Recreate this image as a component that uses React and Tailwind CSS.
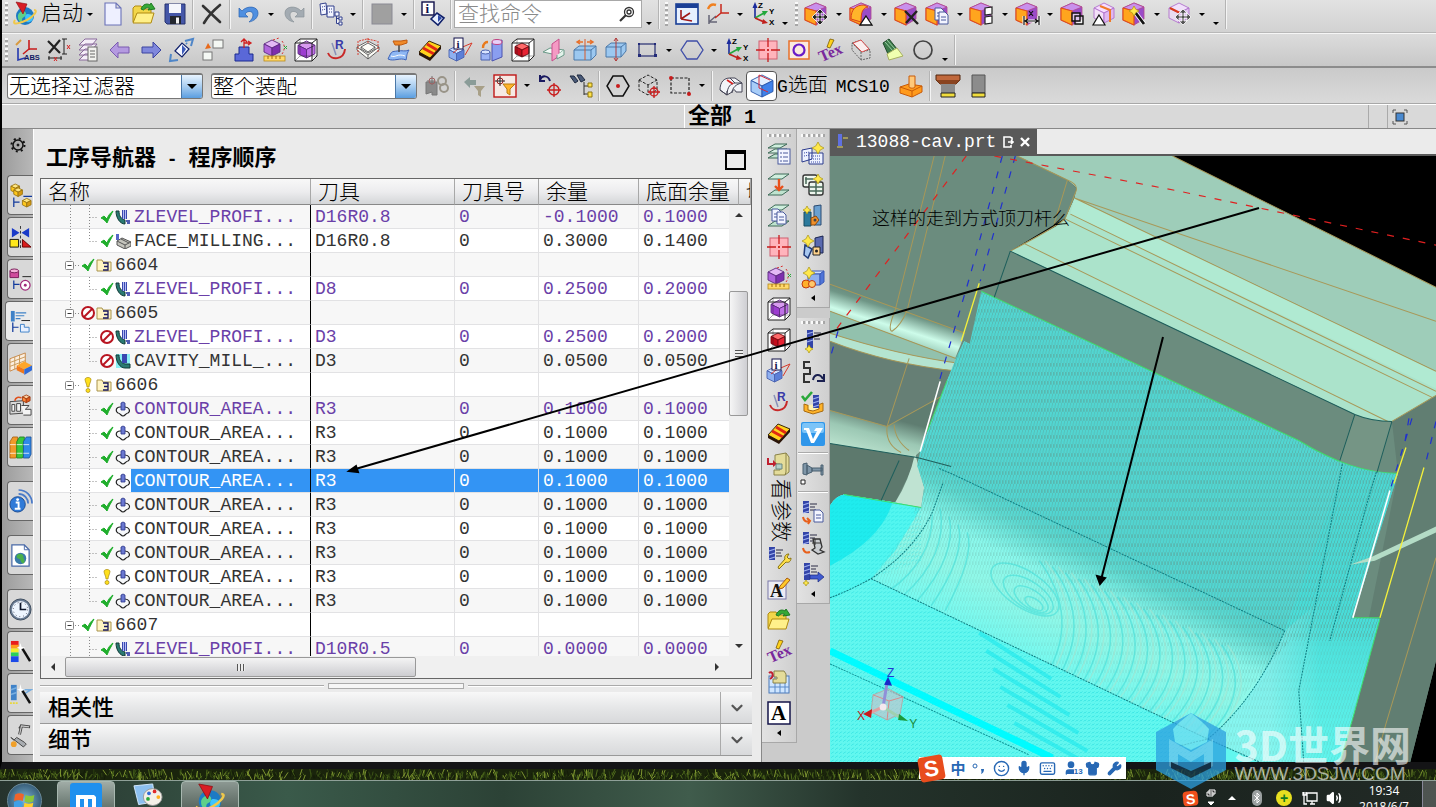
import { useState } from 'react';
import { Bluetooth, ChevronDown, Keyboard, Mic, Shirt, Smile, User, Volume2, Wrench } from 'lucide-react';

const ORANGE = ['#c990ec', '#ffa51e', '#9a4cc8'];
const PURPLE = ['#e3b8f5', '#b065dc', '#7d2fae'];
const BLUE = ['#cfe0ff', '#8fb0f0', '#5c7fd8'];
const RED = ['#ff6a6a', '#c40d1c', '#e82434'];

function Cube({ x = 2, y = 1, s = 20, c = PURPLE, line = '#5c2a80' }) {
  const h = s / 2;
  const q = s / 4;
  return (
    <g stroke={line} strokeWidth="0.9" strokeLinejoin="round">
      <path d={`M${x + h} ${y}L${x + s} ${y + q}L${x + h} ${y + h}L${x} ${y + q}Z`} fill={c[0]} />
      <path d={`M${x} ${y + q}L${x + h} ${y + h}V${y + s}L${x} ${y + s - q}Z`} fill={c[1]} />
      <path d={`M${x + s} ${y + q}L${x + h} ${y + h}V${y + s}L${x + s} ${y + s - q}Z`} fill={c[2]} />
    </g>
  );
}

// purple block with the orange front face used by the feature commands
const Block = ({ x = 0, line = '#b0488c' }) => (
  <g strokeLinejoin="round" strokeWidth="0.8">
    <path d={`M${x} 6L${x + 11} 1L${x + 21} 5V17L${x + 11} 23L${x} 18Z`} fill={ORANGE[2]} stroke={line} />
    <path d={`M${x} 6L${x + 11} 1L${x + 21} 5L${x + 11} 9Z`} fill={ORANGE[0]} stroke={line} />
    <path d={`M${x} 6L${x + 11} 9V23L${x} 18Z`} fill={ORANGE[1]} stroke="#e0501c" strokeWidth="1.2" />
  </g>
);

function Frame({ children }) {
  return (
    <g fill="none" stroke="#222" strokeWidth="1">
      <path d="M1 5L6 1H23V18L18 23H1Z" fill="#fff" />
      {children}
      <path d="M1 5H18V23M18 5L23 1" />
      <path d="M6 1V18H23M6 18L1 23" opacity="0.4" />
    </g>
  );
}

function Axes({ x = 0, y = 0 }) {
  return (
    <g transform={`translate(${x} ${y})`} fontFamily="Liberation Sans" fontWeight="bold" fontSize="8">
      <path d="M4 16V3" stroke="#1a2a9c" strokeWidth="1.6" />
      <path d="M1.500 6L4 0L6.500 6Z" fill="#1a2a9c" />
      <path d="M4 16L13 11" stroke="#22a83c" strokeWidth="1.600" />
      <path d="M11 9L17 9L13 14Z" fill="#22a83c" />
      <path d="M4 16L13 20" stroke="#c0201c" strokeWidth="1.600" />
      <path d="M12 17L17 21L11 22Z" fill="#c0201c" />
      <text x="7" y="6">Z</text>
      <text x="18" y="12">Y</text>
      <text x="18" y="23">X</text>
    </g>
  );
}

function Star({ x, y, r = 5 }) {
  const k = r * 0.35;
  return (
    <path
      transform={`translate(${x} ${y})`}
      d={`M0 ${-r}L${k} ${-k}L${r} 0L${k} ${k}L0 ${r}L${-k} ${k}L${-r} 0L${-k} ${-k}Z`}
      fill="#ffe84a" stroke="#a89410" strokeWidth="0.7"
    />
  );
}

function Drill({ x = 4, y = 2, h = 16 }) {
  return (
    <g>
      <rect x={x} y={y} width="6" height={h} fill="#3344a8" />
      <path d={`M${x} ${y + 4}l6-2M${x} ${y + 8}l6-2M${x} ${y + 12}l6-2`} stroke="#9fb0f0" strokeWidth="1.200" />
      <path d={`M${x + 7} ${y + 3}h7M${x + 7} ${y + 6}h5M${x + 7} ${y + 9}h6`} stroke="#667" strokeWidth="1.300" />
    </g>
  );
}

function Move({ color = '#222' }) {
  return (
    <g stroke="#fff" strokeWidth="0.8" fill={color}>
      <path d="M15 7l4 4h-3v3h3v-3l4 4-4 4v-3h-3v3h3l-4 4-4-4h3v-3h-3v3L7 15l4-4v3h3v-3h-3z" />
    </g>
  );
}

const Sheets = () => (
  <g stroke="#3f6a58" strokeWidth="1">
    <path d="M1 16L8 12H20L13 16Z" fill="#bfe3cf" />
    <path d="M1 11L8 7H20L13 11Z" fill="#d9f0e2" />
    <path d="M1 6L8 2H20L13 6Z" fill="#cfeedd" />
  </g>
);

const Wand = () => (
  <g>
    <path d="M12 10L21 22" stroke="#fff" strokeWidth="4.500" />
    <path d="M12 10L21 22" stroke="#151515" strokeWidth="2.800" />
    <Star x={11} y={9} r={5} />
  </g>
);

const Page = ({ x, y }) => (
  <g stroke="#4a5a9c" strokeWidth="1" fill="#f3f5ff">
    <path d={`M${x} ${y}h6l3 3v9h-9z`} />
    <path d={`M${x + 2} ${y + 5}h5M${x + 2} ${y + 8}h5`} />
  </g>
);

const Folder = () => (
  <g stroke="#b08a10" strokeWidth="1" strokeLinejoin="round">
    <path d="M1 20V6l2-2h6l2 3h8v13z" fill="#f2d64a" />
    <path d="M1 21l4-10h17l-3 10z" fill="#fff08a" />
    <path d="M9 7c2-5 6-6 9-4l1-2 4 6-7 1 1.500-2c-3-1-4 0-6 2z" fill="#35a835" stroke="#1d7a22" />
  </g>
);

const ICONS = {
  nx: (
    <g>
      <circle cx="12" cy="14" r="9" fill="#1d7ac4" />
      <path d="M5 13c2-5 8-5 8-1s-4 2-4 6-5 1-4-5z" fill="#5fd08a" />
      <path d="M14 12c3 0 6 1 6 4s-4 5-6 4-3-7 0-8z" fill="#3ec4ff" />
      <path d="M2 18C-2 24 8 21 14 18S26 8 21 8" fill="none" stroke="#f0c84a" strokeWidth="2" />
      <path d="M3 0L14 2L10 12Z" fill="#d81c24" stroke="#8a0c10" strokeWidth="0.600" />
    </g>
  ),
  new: <path d="M4 1h11l5 5v17H4zM15 1v5h5" fill="#eef0ff" stroke="#6a72b8" strokeWidth="1.100" />,
  open: <Folder />,
  save: (
    <g>
      <path d="M2 2h20v20H4l-2-2z" fill="#4557a8" stroke="#27336e" />
      <rect x="6" y="2" width="12" height="9" fill="#f4f6fb" />
      <rect x="7" y="14" width="11" height="8" fill="#23272f" />
      <rect x="13" y="15.500" width="3" height="6" fill="#f2f2f2" />
    </g>
  ),
  cut: <path d="M3 4L20 20M20 3C14 8 8 14 4 21" stroke="#333" strokeWidth="2.600" fill="none" strokeLinecap="round" />,
  undo: <path d="M2 6v9h9L8 12c3-4 8-3 8 1 0 3-2 5-4 7 5-1 9-4 9-9C21 4 10 3 5 9z" fill="#4f8fe0" stroke="#2a62b0" strokeWidth="0.700" />,
  redo: <path d="M22 6v9h-9l3-3c-3-4-8-3-8 1 0 3 2 5 4 7-5-1-9-4-9-9C3 4 14 3 19 9z" fill="#a3abb2" stroke="#8a9298" strokeWidth="0.700" />,
  tree: (
    <g fill="#f3f5ff" stroke="#33418c">
      <path d="M1 2l6-1 1 11-6 1zM8 4h7v11H8z" />
      <path d="M3 5l4-1M3 8l4-1M10 7h3M10 10h3" strokeDasharray="1 1" />
      <path d="M16 10h4v4h-4zM20 15h3v3h-3zM20 20h3v3h-3zM17.500 14v7.500H20M17.500 16.500H20" />
    </g>
  ),
  square: <rect x="2" y="2" width="20" height="20" fill="#a0a0a0" stroke="#8a8a94" />,
  info: (
    <g>
      <rect x="1" y="0" width="12" height="13" fill="#fff" stroke="#10104a" strokeWidth="1.400" />
      <text x="4.500" y="11" fontFamily="Liberation Serif" fontWeight="bold" fontSize="13" fill="#10104a">i</text>
      <path d="M10 17l6-6 7 5-6 7z" fill="#e8f0ff" stroke="#10206a" strokeWidth="1.600" />
      <path d="M17 13l4 3-4 4z" fill="#2a48a8" />
    </g>
  ),
  csysWin: (
    <g>
      <rect x="1" y="2" width="22" height="20" fill="#e6f0ff" stroke="#1a3f96" strokeWidth="1.600" />
      <path d="M1 4h22" stroke="#1a3f96" strokeWidth="4" />
      <path d="M6 8v9M6 17l9-6M6 17l11 2" stroke="#a01818" strokeWidth="1.600" />
    </g>
  ),
  csysMove: (
    <g fill="none" strokeWidth="1.500">
      <path d="M3 13v9M3 20h8M3 20l7-6" stroke="#667" />
      <path d="M15 2v9M15 11h8M15 11l-6 5" stroke="#c8281c" />
      <path d="M2 7c2-5 5-5 8-4" stroke="#f08020" strokeWidth="2.400" />
    </g>
  ),
  axes: <Axes />,
  cubeMove: <g><Block /><Move /></g>,
  cubeFace: <g><Block /><path d="M1 17C1 7 6 3 14 3l4 2c-5 1-7 4-7 15z" fill="#ffb52a" stroke="#d8401c" /><path d="M16 14l6 9H10z" fill="#fff" stroke="#111" strokeWidth="1.300" /></g>,
  cubeDel: <g><Block /><path d="M10 9l13 13M22 9L11 21" stroke="#222" strokeWidth="2.400" /></g>,
  cubeCopy: <g><Block /><Page x={9} y={6} /><Page x={13} y={10} /></g>,
  cubeTab: <g><Block x={-1} /><path d="M14 6l7-1v7l-7 1zM14 15l7-1v7l-7 1z" fill="#fff" stroke="#222" strokeWidth="1.200" /></g>,
  cubeDim: <g><Block /><path d="M8 14v9M23 14v9M9 19h13" stroke="#fff" strokeWidth="3" fill="none" /><path d="M8 14v9M23 14v9M9 19h13M12 17l-3 2 3 2M19 17l3 2-3 2M13 9l4 5M17 9l-4 5" stroke="#111" strokeWidth="1.200" fill="none" /></g>,
  cubeGroup: <g><Block /><path d="M11 11h8v8h-8zM14 14h8v8h-8z" fill="#ffffffaa" stroke="#111" strokeWidth="1.400" /></g>,
  cubeSect: <g><Cube c={['#f6dcff', '#f3e0f8', '#e0b8f0']} line="#b070cc" /><path d="M8 4l10 4v12" stroke="#f07a2a" strokeWidth="2" fill="none" /><path d="M7 13l6 10H1z" fill="#fff" stroke="#111" strokeWidth="1.200" /></g>,
  cubeWand: <g><Block /><Wand /></g>,
  cubeGhost: <g><Cube x={1} c={['#f1e0fb', '#e9dcf0', '#e0c4f0']} line="#b070cc" /><path d="M2 6l10 5" stroke="#d83a1c" strokeWidth="2" /><Move color="#555" /></g>,
  abs: (
    <g>
      <path d="M14 2v10M14 11h8M14 11l-6 5" stroke="#c81c1c" strokeWidth="1.600" fill="none" />
      <path d="M3 10v12l7-2" stroke="#2338b0" strokeWidth="1.600" fill="none" />
      <path d="M1 7l5-5" stroke="#d89a40" strokeWidth="2" />
      <text x="9" y="22" fontFamily="Liberation Sans" fontWeight="bold" fontSize="7.500" fill="#111a66">ABS</text>
    </g>
  ),
  delDim: <g fill="none"><path d="M2 3l12 12M14 2L3 15" stroke="#222" strokeWidth="2.200" /><path d="M18 1v15M16 1h5M16 16h5M2 20h14M3 18v4M15 18v4" stroke="#222" /><path d="M21 7l3 4M24 7l-3 4M8 19l3 4M11 19l-3 4" stroke="#d82020" /></g>,
  layers: <g><path d="M8 16h12l-5 6H2zM8 11h12l-5 6H2zM8 6h12l-5 6H2zM8 1h12l-5 6H2z" fill="#f5eef8" stroke="#8a6a9c" /><rect x="11" y="9" width="9" height="14" fill="#f2f2ee" stroke="#666" /><path d="M13 13h5M13 16h5M13 19h5" stroke="#666" /></g>,
  left: <path d="M2 12l8-8v5h11v6H10v5z" fill="#b49ae0" stroke="#7a5ab0" />,
  right: <path d="M22 12l-8-8v5H3v6h11v5z" fill="#8088dc" stroke="#3a42a0" />,
  swap: <g><path d="M5 13l7-8 7 6-7 8z" fill="#f4f7ff" stroke="#10206a" strokeWidth="1.200" /><path d="M12 7l4 4-4 6z" fill="#3d5ab8" /><path d="M15 3l8-2-2 7M17 6l-1-1M1 16l-1 7 8-1" stroke="#4f86c8" strokeWidth="2" fill="none" /></g>,
  link: <g><rect x="12" y="2" width="10" height="8" fill="#f4f8f4" stroke="#777" /><rect x="2" y="14" width="9" height="8" fill="#f4f8f4" stroke="#777" /><path d="M4 11l3-6 3 5z" fill="#e86a1c" /></g>,
  post: <g><path d="M7 9h10v7h4v7H3v-7h4z" fill="#5a68d8" stroke="#1a2a90" /><path d="M12 10V2M12 5h6M9 4l3-3 3 3M16 3l3 2-3 2" fill="none" stroke="#d02020" strokeWidth="1.300" /></g>,
  measure: <g><Cube x={1} y={2} s={16} /><rect x="1" y="18" width="21" height="5" fill="#ffd96a" stroke="#b88a1a" strokeWidth="0.800" /><path d="M5 18v3M9 18v3M13 18v3M17 18v3" stroke="#a06a10" /><path d="M10 2l6-2M19 3c3 4 3 9 0 13" fill="none" stroke="#d83030" strokeDasharray="2 2" /><path d="M21 8l3 3M24 8l-3 3" stroke="#2aa83a" /></g>,
  boxWire: <Frame><Cube x={4} y={3} s={17} c={['#d89af0', '#9c3cd0', '#c070e8']} /></Frame>,
  redBox: <Frame><Cube x={4} y={5} s={14} c={RED} line="#7a0810" /></Frame>,
  radius: <g><path d="M3 15c3 8 16 7 17-4" fill="none" stroke="#c82828" strokeWidth="2" /><path d="M7 5l4 12" stroke="#8a90b8" strokeWidth="1.500" /><text x="10" y="11" fontFamily="Liberation Sans" fontWeight="bold" fontSize="12" fill="#3a3aa8">R</text></g>,
  pocket: <g fill="#fbfbf6" stroke="#555" strokeWidth="0.900"><path d="M1 9l11-6 11 6v3l-11 9-11-9z" /><path d="M1 9l11 8 11-8M12 17v4" fill="none" /><path d="M5 9l7-4 7 4-7 5z" /><path d="M5 9v2l7 4 7-4V9" fill="none" /><path d="M2 3v14M12 0v5M22 3v12M3 3l8-2 10 2" stroke="#d83020" strokeDasharray="2 1" fill="none" /></g>,
  surface: <g><path d="M1 21c4-9 4-7 9-8s8 1 12-1c-3 5-2 7-3 10-6-3-12 2-18-1z" fill="#8fb8f4" stroke="#3f64b8" /><path d="M4 18c5 2 6-3 14 0" stroke="#fff" fill="none" /><path d="M12 14V5" stroke="#444" strokeWidth="1.500" /><path d="M6 3h8l6-1v3l-6 2H8z" fill="#f08a2a" stroke="#c05a10" /></g>,
  stripes: <g><path d="M1 14L11 3l12 5-11 12z" fill="#ffd21c" stroke="#3a2a08" /><path d="M5 10l11 6M9 6l10 6" stroke="#e02814" strokeWidth="2.800" /><path d="M1 14l11 6L23 8v3L12 23 1 17z" fill="#2a1408" /></g>,
  infoBox: <g><Cube x={0} y={8} s={15} c={BLUE} line="#4a62b0" /><path d="M4 15l5-4 14-6-7 12" fill="none" stroke="#d83a2a" /><rect x="5" y="0" width="9" height="11" fill="#fff" stroke="#10104a" /><text x="7.500" y="10" fontFamily="Liberation Serif" fontWeight="bold" fontSize="11" fill="#10104a">i</text></g>,
  cylBox: <g><path d="M1 14h9v8H1z" fill="#9cb4f6" stroke="#4a62b0" /><ellipse cx="5.500" cy="14" rx="4.500" ry="2" fill="#d8e4ff" stroke="#4a62b0" /><path d="M12 5L22 2v17l-10 4z" fill="#8a9ef0" stroke="#4a52b0" /><ellipse cx="17" cy="4" rx="5" ry="2.500" fill="#e8d0f8" stroke="#c04080" /><path d="M3 10c0-5 3-6 5-6" stroke="#e87a1c" strokeWidth="2.400" fill="none" /></g>,
  plane: <g><path d="M1 14l7-4 14 2-7 5z" fill="#f2faf6" stroke="#6a9a88" /><path d="M10 6L17 1v17l-7 5z" fill="#f49ac4" stroke="#c8508c" /><path d="M15 17v4l7-4v-5" fill="#e2f2ea" stroke="#6a9a88" /></g>,
  splitH: <g><path d="M1 12l5-4h17v9l-5 5H1z" fill="#9cc8f0" stroke="#4a78a8" /><path d="M1 12h17l5-4M18 12v10" fill="none" stroke="#4a78a8" /><path d="M12 1v21" stroke="#d85a2a" /><path d="M5 4h5M14 4h5M7 2L4 4l3 2M17 2l3 2-3 2" stroke="#e8702a" strokeWidth="1.500" fill="none" /></g>,
  splitV: <g><path d="M2 9l5-4h15v8l-5 6H2z" fill="#9cc8f0" stroke="#4a78a8" /><path d="M2 9h15l5-4M17 9v10" fill="none" stroke="#4a78a8" /><path d="M12 0v23M10 3l2-3 2 3M10 20l2 3 2-3" stroke="#b03a3a" fill="none" /></g>,
  rect: <g><rect x="4" y="6" width="16" height="12" fill="none" stroke="#333a78" strokeWidth="1.300" /><path d="M3 16h3v3H3zM19 16h3v3h-3zM19 5h2v2h-2zM3 5h2v2H3z" fill="#222a78" /></g>,
  hex: <path d="M7 3h10l6 9-6 9H7L1 12z" fill="none" stroke="#3f4ea8" strokeWidth="1.300" />,
  target: <g><rect x="3" y="3" width="18" height="18" fill="#ffb4bc" stroke="#d06070" /><path d="M12 0v9M12 15v9M0 12h9M15 12h9M12 11v2M11 12h2" stroke="#c81c1c" strokeWidth="1.300" /></g>,
  circleBox: <g><rect x="2" y="3" width="20" height="18" fill="#fbeadf" stroke="#e8702a" strokeWidth="1.500" /><circle cx="12" cy="12" r="5.500" fill="none" stroke="#6a1cc8" strokeWidth="2.200" /></g>,
  tex: <g><text x="0" y="20" transform="rotate(-24 12 14)" fontFamily="Liberation Serif" fontWeight="bold" fontSize="16" fill="#7a2a9c">Tex</text><path d="M9 9l3-8 4 1-4 8z" fill="#ffd21c" stroke="#7a5a08" strokeWidth="0.800" /></g>,
  wire: <g fill="none" stroke="#666"><path d="M3 5l9-3 9 10v8l-9 2-9-10z" strokeDasharray="2 1" /><path d="M3 5l9 9 9-2M12 14v8" strokeDasharray="2 1" /><path d="M4 5l8-3 8 9-7 3z" stroke="#d85050" fill="#fbeeee" /></g>,
  lamp: <g><path d="M3 5l6-4 8 10-9 5z" fill="#3c7a4a" stroke="#1f4a2a" /><path d="M5 4l8 9M7 2l8 9" stroke="#9cd0a4" /><path d="M17 10l6 8-14 4-2-6z" fill="#f0ffb0" stroke="#a8b060" /></g>,
  circle: <circle cx="12" cy="12" r="9" fill="none" stroke="#444" strokeWidth="1.700" />,
  chain: <g fill="none" stroke="#999488" strokeWidth="2"><path d="M1 8h11v13H7v-3l-6 2z" fill="#8a8a8a" stroke="#777" strokeWidth="1" /><path d="M7 2v9M2 7h8" stroke="#777" strokeWidth="1" /><circle cx="7" cy="7" r="3" stroke="#a06060" strokeWidth="1" /><circle cx="17" cy="7" r="4" /><circle cx="19" cy="14" r="4" /></g>,
  filterBack: <g><path d="M2 8l6-5v3h6v5H8v3z" fill="#8a9c98" /><path d="M12 12h11l-4 5v6l-3-2v-4z" fill="#a8a088" /></g>,
  filterBox: <g><rect x="1" y="1" width="22" height="22" fill="#f6e9e4" stroke="#c01818" strokeWidth="1.400" /><path d="M10 10h12l-5 5v6l-3-2v-4z" fill="#ffb42a" stroke="#b87a10" /><circle cx="7" cy="7" r="3" fill="none" stroke="#a02020" /><path d="M7 2v10M2 7h10" stroke="#222" /></g>,
  undoTarget: <g fill="none"><path d="M12 7C10 1 4 1 2 6M2 1v6h5" stroke="#1a1a60" strokeWidth="2" /><circle cx="16" cy="16" r="5" stroke="#c81c1c" strokeWidth="1.400" /><path d="M16 9v14M9 16h14" stroke="#c81c1c" strokeWidth="1.300" /></g>,
  bino: <g><path d="M1 2h4l4 5-3 2zM8 1h4l4 5-4 2z" fill="#4a5a78" stroke="#1f2a40" /><path d="M15 8v13M15 12h4M15 20h4" stroke="#333" /><path d="M19 9h4v4h-4zM19 18h4v5h-4z" fill="#ffe24a" stroke="#8a7410" /></g>,
  hexDot: <g><path d="M7 2h10l6 10-6 10H7L1 12z" fill="none" stroke="#111" strokeWidth="1.500" /><circle cx="12" cy="12" r="2" fill="#c81c1c" /></g>,
  cubeTarget: <g fill="none" stroke="#222" strokeDasharray="3 1.500"><path d="M2 6l9-5 9 5v10l-9 5-9-5zM2 6l9 5 9-5M11 11v10" /><g stroke="#c81c1c" strokeDasharray="none" strokeWidth="1.300"><circle cx="17" cy="18" r="4" /><path d="M17 12v12M11 18h12" /></g></g>,
  dashRect: <g><rect x="3" y="4" width="18" height="15" fill="none" stroke="#222" strokeDasharray="3 1.500" strokeWidth="1.200" /><circle cx="3" cy="4" r="2" fill="#c81c1c" /><circle cx="21" cy="20" r="2" fill="#c81c1c" /></g>,
  solid: <g stroke="#445" strokeLinejoin="round"><path d="M1 16c0-8 4-12 10-12h5l7 5v9h-6c-1-3-3-3-4 0l-5 3z" fill="#f2f4f8" /><path d="M1 16l7 5c0-8 4-12 8-12h7M8 21V17M16 9l-5-5M13 19c0-5 4-9 10-10" fill="none" /><path d="M8 6l6 4" stroke="#d82020" strokeWidth="1.600" /></g>,
  blueCube: <g><Cube c={['#e2f0ff', '#a8cdf8', '#3f82ea']} line="#2a56a8" x={1} s={22} /><path d="M9 1v13l9 4M9 1l11 5" stroke="#d82838" fill="none" /></g>,
  orangeBox: <g stroke="#c85a08"><path d="M1 13l9-3 13 2v6l-10 5-12-4z" fill="#ff9a1c" /><path d="M1 13l12 4 10-5M13 17v6" fill="none" /><path d="M10 2h6v11c-2 2-5 1-6 0z" fill="#ffc878" /></g>,
  holder: <g><path d="M0 1h24v5l-4 4H4L0 6z" fill="#c0683c" stroke="#50240c" /><path d="M0 6h24l-4 4H4z" fill="#8a4420" /><path d="M5 10h14v9H5z" fill="#8c8c8c" /><path d="M5 19h14v4H5z" fill="#f0dc3c" stroke="#222" /></g>,
  cutter: <g><path d="M5 1h13v18H5z" fill="#8c8c8c" stroke="#555" /><path d="M5 19h13v4H5z" fill="#f0dc3c" stroke="#222" /></g>,
  sheetList: <g><Sheets /><rect x="11" y="7" width="12" height="15" fill="#f2f5ff" stroke="#4a5a9c" /><path d="M13 11h2M16 11h5M13 15h2M16 15h5M13 19h2M16 19h5" stroke="#4a5a9c" /></g>,
  sheetMove: <g><path d="M1 6L8 1H22L15 6Z" fill="#cfeedd" stroke="#3f6a58" /><path d="M1 22l7-5h14l-7 5z" fill="#bfe3cf" stroke="#3f6a58" /><path d="M12 6v11M8 13l4 4 4-4" stroke="#e8501c" strokeWidth="2.400" fill="none" /></g>,
  sheetCopy: <g><path d="M1 6L8 1H22L15 6Z" fill="#cfeedd" stroke="#3f6a58" /><path d="M1 22l7-5h14l-7 5z" fill="#bfe3cf" stroke="#3f6a58" /><Page x={5} y={5} /><Page x={10} y={8} /></g>,
  machine: <g><path d="M8 3l11-2 3 4v15l-4 3H7v-5h6v-6H8z" fill="#e4dc9a" stroke="#8a8248" /><path d="M19 1v19l-1 3" stroke="#8a8248" fill="none" /><path d="M1 6v6h6" stroke="#c02030" strokeWidth="2" fill="none" /><path d="M6 8l4 4-4 3z" fill="#c02030" /><path d="M9 12h6v5H9z" fill="#b4cfc8" stroke="#6a8880" /></g>,
  drillWrench: <g><Drill x={2} y={1} h={13} /><path d="M11 21l7-8c-1-3 1-5 4-5l-2 3 2 2 2-1c0 4-3 5-5 4l-7 7z" fill="#ffe04a" stroke="#8a7410" /></g>,
  aPencil: <g><rect x="1" y="4" width="18" height="18" fill="#ececf4" stroke="#7a78a8" /><text x="3" y="20" fontFamily="Liberation Serif" fontWeight="bold" fontSize="18" fill="#111">A</text><path d="M13 9l7-8 3 2-7 8-4 1z" fill="#ffc82a" stroke="#a85a10" /></g>,
  machineGrid: <g><rect x="2" y="6" width="20" height="17" fill="#cfe6ff" stroke="#4a78b8" /><path d="M2 17h20M8 6v17M13 6v17M18 6v17" stroke="#5a8ac8" /><path d="M7 1h10l2 3v9H6v-4h4V7H7z" fill="#e4dc9a" stroke="#8a8248" /><path d="M2 3c3-3 6 3 1 6" stroke="#c02030" strokeWidth="2" fill="none" /></g>,
  aBox: <g><rect x="1" y="1" width="22" height="22" fill="#fff" stroke="#14144a" strokeWidth="1.500" /><text x="4" y="19" fontFamily="Liberation Serif" fontWeight="bold" fontSize="21" fill="#000">A</text></g>,
  newProg: <g><path d="M1 8l10-2v11l-10 3zM8 11h14v11H8z" fill="#eef2ff" stroke="#2a3a8c" /><path d="M3 11l6-1M3 14l6-1M10 14h10M10 17h10M10 20h10" stroke="#3a4aa8" strokeDasharray="1 1" /><Star x={17} y={6} r={6} /></g>,
  newTable: <g><rect x="2" y="2" width="14" height="12" rx="2" fill="#eef6ee" stroke="#333" strokeWidth="1.400" /><rect x="8" y="9" width="14" height="13" rx="2" fill="#eef6ee" stroke="#333" strokeWidth="1.400" /><path d="M8 14h14M15 10v12M8 18h14M4 6h8M5 4v7" stroke="#4a6a5a" strokeWidth="1.500" /><Star x={17} y={6} r={5} /></g>,
  newTool: <g><path d="M3 8h7v14H3z" fill="#2c7a9c" stroke="#174a60" /><path d="M13 2l7-1v20h-7z" fill="#6aa0d0" stroke="#2a4a70" /><path d="M10 14l5-2 3 4-4 5h-4z" fill="#f0902a" stroke="#8a4a10" /><circle cx="14" cy="16" r="1.500" fill="#444" /><Star x={6} y={6} r={4} /></g>,
  newGeom: <g><path d="M4 10l7 4-4 9-4-3z" fill="#a8c8f0" stroke="#1f3a78" strokeWidth="1.500" /><path d="M14 3l8-2v17h-8z" fill="#5a6ab0" stroke="#1a2450" /><path d="M12 12h7v8h-7z" fill="#ffd28a" stroke="#222" /><circle cx="15.500" cy="16" r="1.500" fill="#222" /><Star x={7} y={6} r={6} /></g>,
  newMethod: <g><path d="M7 8l4-3h12l-4 3z" fill="#cfe0ff" stroke="#3a5ab8" /><path d="M7 8h12v11H7z" fill="#8fb0f0" stroke="#3a5ab8" /><path d="M19 8l4-3v11l-4 3z" fill="#4f74d8" stroke="#3a5ab8" /><Star x={8} y={7} r={6} /><circle cx="5" cy="18" r="4" fill="#ffb02a" stroke="#c03a10" /><circle cx="11" cy="18" r="3.500" fill="#ffc86a" stroke="#c03a10" /></g>,
  genTool: <g><Drill x={6} y={1} h={18} /><Star x={8} y={20} r={4} /></g>,
  path: <g fill="none"><path d="M9 2H3v6h6v6H3v8h6" stroke="#333" strokeWidth="2" /><path d="M12 20c1-6 7-7 10-1M23 14v7h-7" stroke="#1a2050" strokeWidth="2" /></g>,
  verify: <g><path d="M3 13l9 3 10-4v8l-10 3-9-3z" fill="#ffb42a" stroke="#a86a10" /><path d="M7 14v5l5 1 6-2v-5" fill="#fff2b0" stroke="#a86a10" /><rect x="12" y="4" width="6" height="13" fill="#3344a8" /><path d="M12 8l6-2M12 12l6-2M12 16l6-2" stroke="#9fb0f0" strokeWidth="1.200" /><path d="M1 5l3 4 7-8" stroke="#2aa83a" strokeWidth="2.600" fill="none" /></g>,
  vlogo: <g><rect width="24" height="24" rx="2" fill="#2f96ea" /><rect x="1" y="1" width="22" height="10" rx="2" fill="#7cc4f8" /><path d="M3 6h5l4 11 4-8h-3l2-3h7L13 21h-3L5 8H3z" fill="#fff" /></g>,
  spindle: <g><path d="M2 3l4-1v12l-4-1zM6 4l5 3v4l-5 2zM11 7h10v3H11zM20 4h2v10h-2z" fill="#7f96a8" stroke="#4a6070" /><path d="M0 19h4v4H0z" fill="#fff" stroke="#222" /></g>,
  drillPage: <g><Drill x={2} y={1} h={12} /><Page x={13} y={10} /><path d="M2 17c1 5 4 5 7 4M6 18l3 3-2 3" stroke="#e8601c" strokeWidth="2" fill="none" /></g>,
  drillShop: <g><Drill x={2} y={1} h={12} /><path d="M12 8h7l2 8-2 3 4 2-6 2-6-4 3-2z" fill="#c8ccd0" stroke="#333" strokeWidth="1.300" /><path d="M11 12h9M14 8v6" stroke="#333" /><path d="M2 17c1 5 4 5 7 4" stroke="#e8601c" strokeWidth="2" fill="none" /></g>,
  drillOut: <g><Drill x={3} y={1} h={17} /><path d="M9 13h8v-3l6 5-6 5v-3H9z" fill="#3f5ad0" stroke="#1a2a80" strokeWidth="0.700" /><Star x={5} y={21} r={3} /></g>,
  tabAsm: <g><Cube x={2} y={0} s={9} c={['#ffe680', '#ffc81c', '#d89a10']} line="#9a7410" /><Cube x={5} y={4} s={9} c={['#ffe680', '#ffc81c', '#d89a10']} line="#9a7410" /><Cube x={14} y={15} s={9} c={['#ffe680', '#ffc81c', '#d89a10']} line="#9a7410" /><path d="M5 14v10M5 19h6M15 13h9" stroke="#123a9c" strokeWidth="1.300" /></g>,
  tabCons: <g><path d="M3 2l8 5-8 5zM21 2l-8 5 8 5z" fill="#1a3ac8" /><path d="M12 0v24" stroke="#333" strokeDasharray="3 2" /><path d="M1 14h9v8H1z" fill="#ffe81c" stroke="#111" /><path d="M14 22v-8l9 8z" fill="#d81c1c" stroke="#600" /></g>,
  tabPart: <g><path d="M1 3h9v7H1z" fill="#d04a9c" stroke="#7a1c5a" /><ellipse cx="5.500" cy="3" rx="4.500" ry="2" fill="#f4b0d8" stroke="#7a1c5a" /><path d="M5 13v9M5 17h6" stroke="#123a9c" strokeWidth="1.300" /><path d="M14 9h9" stroke="#222" /><circle cx="17" cy="18" r="5" fill="#fff" stroke="#a02a7a" strokeWidth="1.300" /><circle cx="17" cy="18" r="1.500" fill="#a02a7a" /></g>,
  tabOp: <g><path d="M3 1h4v11H3z" fill="#3f82c8" /><path d="M8 3h11M8 6h9M8 9h5" stroke="#3f82c8" strokeWidth="1.300" /><path d="M5 13v10M5 18h6" stroke="#123a9c" strokeWidth="1.300" /><path d="M14 11h9" stroke="#222" /><path d="M13 15h4v3h5v5h-9z" fill="#e8f0ff" stroke="#3f82c8" /></g>,
  tabWcs: <g><path d="M1 7l16-6v12L1 20z" fill="#fbeee0" stroke="#c88a4a" /><path d="M1 11l16-6M1 15l16-6M6 5v13M11 3v13" stroke="#c89a5a" /><path d="M8 14l8-4 8 4-8 4z" fill="#ffa62a" /><path d="M8 14l8 4v5l-8-4z" fill="#f0781c" /><path d="M16 18l8-4v5l-8 5z" fill="#2f6ad8" /></g>,
  tabMach: <g><path d="M1 8l14-1v13l-14 1z" fill="#d8d8d8" stroke="#444" /><path d="M3 11h3v7H3zM8 10h4v8H8zM13 12h8l-4 4h6v6h-8" fill="#f4f4f4" stroke="#444" /><Cube x={14} y={1} s={8} c={['#ffd0a0', '#ff8a3a', '#e05a1c']} line="#a03a10" /><path d="M6 7c1-4 4-4 7-3" stroke="#e0501c" strokeWidth="1.600" fill="none" /></g>,
  tabBooks: <g strokeWidth="0.800"><path d="M1 6l3-5h5v18l-2 4H1z" fill="#f09a2a" stroke="#a05a10" /><path d="M8 6l3-5h5v18l-2 4H8z" fill="#3ac83a" stroke="#1a7a1a" /><path d="M15 6l3-5h5v18l-2 4h-6z" fill="#2f8ae8" stroke="#1a4a90" /><path d="M1 9h6M8 9h6M15 9h6M1 18h6M8 18h6M15 18h6" stroke="#fff" /></g>,
  tabInfo: <g><circle cx="9" cy="15" r="8" fill="#2f7ad8" stroke="#1a4a90" /><path d="M7 13h3v6M6 19.500h6" stroke="#fff" strokeWidth="2" fill="none" /><circle cx="9" cy="10" r="1.500" fill="#fff" /><path d="M10 4c6 0 10 5 10 10M10 0c8 0 14 6 14 14" stroke="#4a7ac8" strokeWidth="1.800" fill="none" /></g>,
  tabWeb: <g><path d="M3 1h13l5 5v17H3z" fill="#fff" stroke="#4a6aa8" strokeWidth="1.300" /><path d="M16 1v5h5" fill="none" stroke="#4a6aa8" /><circle cx="12" cy="15" r="6" fill="#3a7aa8" /><path d="M8 12c2-3 7-2 7 1s2 3 1 6-4 0-4-2-5-1-4-5z" fill="#4ab04a" /></g>,
  tabClock: <g><circle cx="12" cy="12" r="11" fill="#6a7c94" stroke="#3c4a5c" /><circle cx="12" cy="12" r="9" fill="#eef6ff" /><circle cx="12" cy="12" r="7.500" fill="none" stroke="#556" strokeDasharray="1 3" /><path d="M12 5v7h6" stroke="#10182c" strokeWidth="1.800" fill="none" /></g>,
  tabColor: <g><path d="M2 1h8v5H2z" fill="#e81c1c" /><path d="M2 5h8v4H2z" fill="#ff9a1c" /><path d="M2 9h8v4H2z" fill="#f0f02a" /><path d="M2 13h8v4H2z" fill="#2ad05a" /><path d="M2 17h8v6H2z" fill="#1c4ae8" /><path d="M14 9l8 13" stroke="#111" strokeWidth="2.600" /><path d="M12 3l1 4 4 1-4 1-1 3-1-3-3-1 3-1z" fill="#fff" /></g>,
  tabMillWand: <g><path d="M2 3h6v16H2z" fill="#3f82c8" /><path d="M9 8h14l-8 5M2 8l6-2M2 13l6-2" stroke="#78aee0" strokeWidth="1.600" fill="none" /><path d="M14 9l8 13" stroke="#111" strokeWidth="2.600" /><path d="M12 2l1 5 4 1-4 1-1 3-1-3-3-1 3-1z" fill="#fff" /><path d="M1 22h9" stroke="#e8d83a" strokeWidth="2" strokeDasharray="2 1" /></g>,
  tabRobot: <g><path d="M11 11L13 2l9 1M13 2l-2 3" stroke="#444" strokeWidth="3" fill="none" /><path d="M11 11L13 2l8 1" stroke="#ccc" strokeWidth="1.200" fill="none" /><path d="M2 14l3 3 3-3 8 5 2 2-3 3-5-4z" fill="#a8acb0" stroke="#444" /><circle cx="5" cy="21" r="3" fill="#f0a02a" /></g>,
};

function Icon({ name, className = 'size-6' }) {
  return <svg viewBox="0 0 24 24" aria-hidden="true" className={`${className} shrink-0 overflow-visible`}>{ICONS[name]}</svg>;
}

function ToolButton({ name, active }) {
  return (
    <button aria-label={name} className={`flex h-[30px] w-[31px] shrink-0 items-center justify-center ${active ? 'rounded-sm border border-[#555] bg-white' : ''}`}>
      <Icon name={name} />
    </button>
  );
}

function Caret({ low }) {
  return (
    <span className={`flex h-[30px] w-3.5 shrink-0 justify-center ${low ? 'items-end pb-1' : 'items-center'}`}>
      <span className="border-x-[3px] border-t-[3px] border-x-transparent border-t-black" />
    </span>
  );
}

const Sep = () => <span className="mx-0.5 h-[30px] w-0.5 shrink-0 border-l border-[#b4b4b4] bg-[#f4f4f4]" />;
const Grip = () => <span className="mx-[3px] h-6 w-[3px] shrink-0 bg-[repeating-linear-gradient(to_bottom,#fafafa_0_2px,#a6a6a6_2px_4px,#d6d6d6_4px_5px)]" />;

function Tools({ items }) {
  return items.map((it, i) => {
    if (it === '|') return <Sep key={i} />;
    if (it === 'v') return <Caret key={i} />;
    if (it === '_') return <Caret key={i} low />;
    if (it === ':') return <Grip key={i} />;
    return <ToolButton key={i} name={it} />;
  });
}

const ROW1_A = ['new', 'open', 'save', '|', 'cut', '|', 'undo', 'v', 'redo', '|', 'tree', 'v', '|', 'square', 'v', '|', 'info', '|'];
const ROW1_B = ['|', ':', 'csysWin', 'csysMove', 'v', 'axes', '_'];
const ROW1_C = [':', 'cubeMove', 'v', 'cubeFace', 'v', 'cubeDel', 'cubeCopy', 'v', 'cubeTab', 'v', 'cubeDim', 'v', 'cubeGroup', 'cubeSect', 'cubeWand', 'v', 'cubeGhost', 'v', '_', '|'];
const ROW2 = [
  'abs', 'delDim', 'layers', 'left', 'right', 'swap', 'link', 'post', 'measure', 'boxWire', 'radius', 'pocket', 'surface',
  'stripes', 'infoBox', 'cylBox', 'redBox', 'plane', 'splitH', 'splitV', 'rect', 'v', 'hex', 'v', 'axes', 'target',
  'circleBox', 'tex', 'wire', 'lamp', 'circle', '_',
];

function Combo({ label, options, className }) {
  return (
    <div className={`relative h-[26px] shrink-0 overflow-hidden rounded-[3px] border border-t-2 border-[#777] bg-white ${className}`}>
      <select aria-label={label} className="h-full w-full appearance-none bg-transparent pt-0.5 pr-6 pl-px text-[21px] leading-[21px] font-light text-black">
        {options.map((o) => <option key={o}>{o}</option>)}
      </select>
      <span className="pointer-events-none absolute inset-y-0 right-0 flex w-[21px] items-center justify-center border-l border-[#4a78a8] bg-linear-to-b from-[#e8f4ff] via-[#a8cdf0] to-[#5a9ee0]">
        <span className="border-x-[5px] border-t-[5px] border-x-transparent border-t-black" />
      </span>
    </div>
  );
}

const ROWS = [
  { op: 'zlevel', name: 'ZLEVEL_PROFI...', st: 'ok', tool: 'D16R0.8', n: '0', a: '-0.1000', b: '0.1000', hot: true },
  { op: 'face', name: 'FACE_MILLING...', st: 'ok', tool: 'D16R0.8', n: '0', a: '0.3000', b: '0.1400', end: true },
  { group: '6604', st: 'ok' },
  { op: 'zlevel', name: 'ZLEVEL_PROFI...', st: 'ok', tool: 'D8', n: '0', a: '0.2500', b: '0.2000', hot: true, end: true },
  { group: '6605', st: 'ban' },
  { op: 'zlevel', name: 'ZLEVEL_PROFI...', st: 'ban', tool: 'D3', n: '0', a: '0.2500', b: '0.2000', hot: true },
  { op: 'cavity', name: 'CAVITY_MILL_...', st: 'ban', tool: 'D3', n: '0', a: '0.0500', b: '0.0500', end: true },
  { group: '6606', st: 'warn' },
  { op: 'contour', name: 'CONTOUR_AREA...', st: 'ok', tool: 'R3', n: '0', a: '0.1000', b: '0.1000', hot: true },
  { op: 'contour', name: 'CONTOUR_AREA...', st: 'ok', tool: 'R3', n: '0', a: '0.1000', b: '0.1000' },
  { op: 'contour', name: 'CONTOUR_AREA...', st: 'ok', tool: 'R3', n: '0', a: '0.1000', b: '0.1000' },
  { op: 'contour', name: 'CONTOUR_AREA...', st: 'ok', tool: 'R3', n: '0', a: '0.1000', b: '0.1000' },
  { op: 'contour', name: 'CONTOUR_AREA...', st: 'ok', tool: 'R3', n: '0', a: '0.1000', b: '0.1000' },
  { op: 'contour', name: 'CONTOUR_AREA...', st: 'ok', tool: 'R3', n: '0', a: '0.1000', b: '0.1000' },
  { op: 'contour', name: 'CONTOUR_AREA...', st: 'ok', tool: 'R3', n: '0', a: '0.1000', b: '0.1000' },
  { op: 'contour', name: 'CONTOUR_AREA...', st: 'warn', tool: 'R3', n: '0', a: '0.1000', b: '0.1000' },
  { op: 'contour', name: 'CONTOUR_AREA...', st: 'ok', tool: 'R3', n: '0', a: '0.1000', b: '0.1000', end: true },
  { group: '6607', st: 'ok' },
  { op: 'zlevel', name: 'ZLEVEL_PROFI...', st: 'ok', tool: 'D10R0.5', n: '0', a: '0.0000', b: '0.0000', hot: true },
];

const ROW_ICONS = {
  ok: <path d="M2 9l3-2 3 3c1-3 3-6 6-8-2 4-4 7-6 12-2-2-3-4-6-5z" fill="#1fae2c" stroke="#1fae2c" strokeWidth="1" />,
  ban: <g fill="none" stroke="#b81420" strokeWidth="2"><circle cx="8" cy="8" r="6" fill="#fff" /><path d="M4 12l8-8" /></g>,
  warn: <g fill="#ffe01c" stroke="#a88a10" strokeWidth="0.700"><path d="M5 2c1-2 5-2 6 0 0 3-2 5-2 8H7c0-3-2-5-2-8z" /><circle cx="8" cy="13.500" r="2" /></g>,
  folder: <g><path d="M1 14V3h5l1 2h8v9z" fill="#fff4c4" stroke="#a8924a" /><path d="M7 6h5v7H7M8 9.500h4" stroke="#1a1a60" strokeWidth="1.300" fill="none" /></g>,
  zlevel: <g><path d="M1 2h3c0 5 2 8 6 9v4C5 15 1 9 1 2z" fill="#2a7a72" stroke="#123a36" /><path d="M11 12h4M12 14h3" stroke="#1a2a9c" strokeWidth="1.300" /><rect x="7" y="1" width="5" height="9" fill="#3a48b0" /><path d="M8.500 1v9M10.500 1v9" stroke="#b4bcf4" /></g>,
  cavity: <g><path d="M1 1h14v14H1z" fill="#8af0f4" /><path d="M1 2h3c0 5 2 8 6 9h5v4h-5C5 15 1 9 1 2z" fill="#2a7a72" stroke="#123a36" /><rect x="7" y="1" width="5" height="9" fill="#3a48b0" /></g>,
  face: <g><path d="M2 8l5-3 9 4v4l-6 3-8-4z" fill="#c4c4bc" stroke="#555" /><path d="M2 8l8 4 6-3M10 12v4M6 6l8 4" fill="none" stroke="#555" /><path d="M1 1h3v6H1z" fill="#5566c8" /></g>,
  contour: <g><path d="M5 6C1 6 0 10 3 12c2 0 3 3 5 3s3-3 5-3c3-2 1-6-3-6z" fill="#f6f8fa" stroke="#222" strokeWidth="1.100" /><path d="M6 2l2-1 2 1v7H6z" fill="#6a78d0" stroke="#2a3488" strokeWidth="0.800" /></g>,
};

const RowIcon = ({ name }) => <svg viewBox="0 0 16 16" aria-hidden="true" className="size-4 shrink-0">{ROW_ICONS[name]}</svg>;

function TreeLines({ row }) {
  if (row.group) {
    return (
      <svg viewBox="0 0 39 24" aria-hidden="true" className="h-6 w-[39px] shrink-0" stroke="#888" fill="none">
        <path d="M29.500 0V24M34 12.500h5" strokeDasharray="1 2" />
        <rect x="24.500" y="8.500" width="8" height="8" rx="1" fill="#fff" />
        <path d="M26.500 12.500h4" stroke="#333" />
      </svg>
    );
  }
  return (
    <svg viewBox="0 0 58 24" aria-hidden="true" className="h-6 w-[58px] shrink-0" stroke="#888" fill="none" strokeDasharray="1 2">
      <path d={`M29.500 0V24M48.500 0V${row.end ? 12 : 24}M48.500 12.500H57`} />
    </svg>
  );
}

function OperationTable({ selected, onSelect }) {
  return (
    <table className="w-full table-fixed border-separate border-spacing-0 text-left">
      <colgroup>
        <col className="w-[270px]" />
        <col className="w-36" />
        <col className="w-[84px]" />
        <col className="w-[100px]" />
        <col className="w-[100px]" />
        <col />
      </colgroup>
      <thead>
        <tr className="h-[26px] bg-linear-to-b from-[#f8f8f8] via-[#ececee] to-[#d2d4d6] text-[21px] leading-[21px]">
          {['名称', '刀具', '刀具号', '余量', '底面余量', '切'].map((h) => (
            <th key={h} className="overflow-hidden border-r border-b border-r-[#a8a8a8] border-b-[#888] p-0 pt-1 pl-[7px] font-light whitespace-nowrap">{h}</th>
          ))}
        </tr>
      </thead>
      <tbody>
        {ROWS.map((r, i) => {
          const sel = selected === i;
          const cell = `border-b border-r border-[#e2e2e4] p-0 pt-0.5 pl-1 ${sel ? 'bg-[#3394f4]' : ''}`;
          return (
            <tr
              key={i}
              onClick={() => onSelect(i)}
              className={`h-6 text-[18px] leading-[21px] ${i % 2 ? 'bg-white' : 'bg-[#f7f7f7]'} ${sel ? 'text-white' : r.hot ? 'text-[#6a3fa8]' : 'text-[#333]'}`}
            >
              <td className="overflow-hidden border-r border-b border-r-black border-b-[#e2e2e4] p-0">
                <div className="flex h-[23px] items-center">
                  <TreeLines row={r} />
                  <RowIcon name={r.st} />
                  <RowIcon name={r.group ? 'folder' : r.op} />
                  <span className={`flex-1 pt-0.5 pl-[3px] ${sel ? 'bg-[#3394f4]' : ''}`}>{r.group || r.name}</span>
                </div>
              </td>
              <td className={cell}>{r.tool}</td>
              <td className={cell}>{r.n}</td>
              <td className={cell}>{r.a}</td>
              <td className={cell}>{r.b}</td>
              <td className="border-b border-[#e2e2e4]" />
            </tr>
          );
        })}
      </tbody>
    </table>
  );
}

function Navigator() {
  const [selected, setSelected] = useState(11);
  return (
    <section className="flex w-[728px] shrink-0 flex-col border-l border-white bg-[#ebebeb] pr-[9px] pl-1.5">
      <header className="flex h-[49px] shrink-0 items-center justify-between pt-3 pr-1.5 pl-1.5">
        <h1 className="text-[22px] font-bold">工序导航器<span className="text-[18px]"> - </span>程序顺序</h1>
        <button aria-label="最大化" className="h-5 w-[21px] border-2 border-t-4 border-black" />
      </header>
      <div className="relative flex min-h-0 flex-1 flex-col border border-[#666] bg-[#f0f0f0]">
        <div className="min-h-0 flex-1 overflow-hidden">
          <OperationTable selected={selected} onSelect={setSelected} />
        </div>
        <div className="absolute top-[26px] right-0 bottom-[22px] flex w-[22px] flex-col items-center justify-between bg-[#f0f0f0] py-2 pr-[3px]">
          <span className="border-x-4 border-b-4 border-x-transparent border-b-[#333]" />
          <div className="absolute top-[86px] right-[3px] flex h-[125px] w-[19px] items-center justify-center rounded-xs border border-[#999] bg-linear-to-r from-[#f6f6f6] to-[#cfcfd3]">
            <span className="h-2 w-2 bg-[repeating-linear-gradient(to_bottom,#555_0_1px,#eee_1px_3px)]" />
          </div>
          <span className="border-x-4 border-t-4 border-x-transparent border-t-[#333]" />
        </div>
        <div className="flex h-[22px] shrink-0 items-center bg-[#f0f0f0]">
          <span className="mx-2.5 border-y-4 border-r-4 border-y-transparent border-r-[#333]" />
          <div className="flex h-5 w-[351px] items-center justify-center rounded-xs border border-[#999] bg-linear-to-b from-[#f4f4f4] to-[#cdcdd1]">
            <span className="h-[7px] w-2 bg-[repeating-linear-gradient(to_right,#555_0_1px,#eee_1px_3px)]" />
          </div>
          <span className="mr-8 ml-auto border-y-4 border-l-4 border-y-transparent border-l-[#333]" />
        </div>
      </div>
      <div className="flex h-[13px] shrink-0 items-center">
        <span className="h-0.5 flex-1 border-t border-[#aaa] bg-white" />
        <span className="mx-1 h-1.5 w-[136px] border border-[#aaa] bg-[#f6f6f6]" />
        <span className="h-0.5 flex-1 border-t border-[#aaa] bg-white" />
      </div>
      {['相关性', '细节'].map((t) => (
        <button key={t} className="flex h-8 shrink-0 items-center border-b border-[#999] bg-linear-to-b from-[#f8f8f8] via-[#e6e7e8] to-[#d8d9db] pl-2 text-left text-[22px] font-medium">
          <span className="flex-1 pt-1 leading-6">{t}</span>
          <span className="flex h-full w-8 items-center justify-center border-l border-[#aaa]">
            <ChevronDown size={18} strokeWidth={3} color="#555" />
          </span>
        </button>
      ))}
      <div className="h-1.5 shrink-0" />
    </section>
  );
}

const TABS = [['tabAsm', 'tabCons', 'tabPart', 'tabOp', 'tabWcs', 'tabMach', 'tabBooks'], ['tabInfo'], ['tabWeb'], ['tabClock', 'tabColor', 'tabMillWand', 'tabRobot']];

function Rail() {
  return (
    <nav className="flex w-[31px] shrink-0 flex-col gap-3.5 bg-linear-to-r from-[#9c9c9c] to-[#b8b8b8]">
      <button aria-label="设置" className="flex h-8 items-center justify-center">
        <svg viewBox="0 0 16 16" className="size-4" fill="none" stroke="#111"><circle cx="8" cy="8" r="5" strokeWidth="1.500" /><circle cx="8" cy="8" r="6.500" strokeWidth="2" strokeDasharray="2 3.100" /><circle cx="8" cy="8" r="1" fill="#111" /></svg>
      </button>
      {TABS.map((group, g) => (
        <div key={g} className="flex flex-col gap-0.5">
          {group.map((t) => (
            <button
              key={t}
              aria-label={t}
              className={`flex h-10 items-center justify-center rounded-l border border-r-0 border-[#666] ${t === 'tabOp' ? 'ml-[3px] bg-[#ebebeb]' : 'ml-[5px] bg-[#d8d8d8]'}`}
            >
              <Icon name={t} className="size-[23px]" />
            </button>
          ))}
        </div>
      ))}
    </nav>
  );
}

const HGrip = () => <span className="mt-[3px] mb-px h-[3px] w-6 shrink-0 bg-[repeating-linear-gradient(to_right,#fafafa_0_2px,#a6a6a6_2px_4px,#d6d6d6_4px_5px)]" />;
const SideCaret = () => <span className="mt-0.5 mb-1.5 border-y-[3px] border-r-[4px] border-y-transparent border-r-black" />;
const HSep = () => <span className="my-[3px] h-0.5 w-[30px] shrink-0 border-t border-[#aaa] bg-white" />;

function SideTool({ name }) {
  return <button aria-label={name} className="flex h-[31px] w-8 shrink-0 items-center justify-center"><Icon name={name} /></button>;
}

function SideBars() {
  const box = 'flex flex-col items-center border-r border-b border-[#a8a8a8] bg-linear-to-r from-[#e2e2e2] to-[#cfcfcf]';
  return (
    <div className="flex w-[69px] shrink-0 items-start border-l border-[#888] bg-[#cbcbcb]">
      <div className={`${box} w-[35px] pt-0.5`}>
        <HGrip />
        {['sheetList', 'sheetMove', 'sheetCopy', 'target', 'measure', 'boxWire', 'redBox', 'infoBox', 'radius', 'stripes', 'machine'].map((n) => <SideTool key={n} name={n} />)}
        <button className="my-1.5 text-[21px] leading-8 font-light [text-orientation:sideways] [writing-mode:vertical-rl]">看参数</button>
        {['drillWrench', 'aPencil', 'open', 'tex', 'machineGrid', 'aBox'].map((n) => <SideTool key={n} name={n} />)}
        <SideCaret />
      </div>
      <div className="flex flex-col gap-2.5">
        <div className={`${box} w-[33px] pt-0.5`}>
          <HGrip />
          {['newProg', 'newTable', 'newTool', 'newGeom', 'newMethod'].map((n) => <SideTool key={n} name={n} />)}
          <SideCaret />
        </div>
        <div className={`${box} w-[33px]`}>
          <HGrip />
          {['genTool', 'path', 'verify', 'vlogo'].map((n) => <SideTool key={n} name={n} />)}
          <HSep />
          <SideTool name="spindle" />
          <HSep />
          {['drillPage', 'drillShop', 'drillOut'].map((n) => <SideTool key={n} name={n} />)}
          <SideCaret />
        </div>
      </div>
    </div>
  );
}

function Model() {
  return (
    <svg viewBox="831 156 605 606" preserveAspectRatio="xMinYMin slice" aria-hidden="true" className="h-full w-full">
      <defs>
        <linearGradient id="tube" gradientUnits="userSpaceOnUse" x1="890" y1="300" x2="878" y2="338">
          <stop offset="0" stopColor="#66877a" /><stop offset="0.200" stopColor="#6f9686" /><stop offset="0.600" stopColor="#cdfcea" /><stop offset="1" stopColor="#8fc0ac" />
        </linearGradient>
        <linearGradient id="lowTube" gradientUnits="userSpaceOnUse" x1="870" y1="412" x2="860" y2="450">
          <stop offset="0" stopColor="#5f7d71" /><stop offset="0.500" stopColor="#9cc8b4" /><stop offset="1" stopColor="#b8e0cc" />
        </linearGradient>
        <linearGradient id="cut" gradientUnits="userSpaceOnUse" x1="1118" y1="551" x2="1062" y2="669">
          <stop offset="0" stopColor="#52d6d2" /><stop offset="0.120" stopColor="#5cdad2" /><stop offset="0.380" stopColor="#8af8ec" /><stop offset="0.650" stopColor="#90f8e8" /><stop offset="1" stopColor="#76faf0" />
        </linearGradient>
        <linearGradient id="side" gradientUnits="userSpaceOnUse" x1="1380" y1="480" x2="1310" y2="740">
          <stop offset="0" stopColor="#4cd6d2" /><stop offset="0.500" stopColor="#48dcd8" /><stop offset="1" stopColor="#5ef4ec" />
        </linearGradient>
        <linearGradient id="sideIn" gradientUnits="userSpaceOnUse" x1="1270" y1="0" x2="1320" y2="0">
          <stop offset="0" stopColor="#fff" stopOpacity="0.250" /><stop offset="1" stopColor="#fff" stopOpacity="0" />
        </linearGradient>
        <pattern id="hatch" width="3" height="9" patternUnits="userSpaceOnUse" shapeRendering="crispEdges">
          <path d="M2 0h1v3H2zM1 3h1v3H1zM0 6h1v3H0z" fill="#5f9488" opacity="0.480" />
        </pattern>
        <pattern id="mesh" width="4" height="4" patternUnits="userSpaceOnUse" shapeRendering="crispEdges">
          <path d="M0 0h1v1H0zM2 2h1v1H2zM1 3h1v1H1z" fill="#12d4d8" opacity="0.450" />
        </pattern>
        <linearGradient id="fadeG" gradientUnits="userSpaceOnUse" x1="1118" y1="551" x2="1084" y2="623">
          <stop offset="0" stopColor="#fff" /><stop offset="1" stopColor="#fff" stopOpacity="0.300" />
        </linearGradient>
        <mask id="fade" maskUnits="userSpaceOnUse" x="831" y="156" width="605" height="606"><rect x="831" y="156" width="605" height="606" fill="url(#fadeG)" /></mask>
        <clipPath id="cyanClip">
          <path d="M982 291L1299 440C1335 462 1365 472 1398 473L1353 617L1380 618L1353 717L1340 762H831V505Q836 496 845 494L896 502L922 507L925 487L918 465L921 451L948 380L958 355L965 341L973 345L964 373Z" />
        </clipPath>
        <clipPath id="filletClip">
          <path d="M944 482Q933 540 872 578L1208 738Q1255 700 1285 630Z" />
        </clipPath>
      </defs>
      <rect x="831" y="156" width="605" height="606" fill="#000" />
      {/* stock walls */}
      <path d="M831 156H1018L1068 180L1077 188L1075 198L1066 218L1011 251L1355 414L1392 421L1436 395V660L1410 762H831Z" fill="#6b8c7e" />
      <path d="M1392 421L1436 395V660L1410 762H1340L1398 473Z" fill="#617e72" />
      <path d="M1355 414Q1375 422 1392 421L1377 473L1338 462Z" fill="#759585" />
      {/* top faces */}
      <path d="M1010 156H1173L1436 287V371L1075 198L1077 188L1068 180L1018 156Z" fill="#9ecdb9" />
      <path d="M1075 198L1436 371V395L1392 421Q1372 421 1355 414L1011 251L1057 226L1066 218Z" fill="#abe3cb" />
      <path d="M1075 198L1436 371V388L1071 214Z" fill="#b0ead2" />
      {/* left ribs */}
      <path d="M831 284L966 333L956 358L831 311Z" fill="url(#tube)" />
      <path d="M831 311L956 358L960 363Q900 355 831 333Z" fill="#92c1ad" />
      <path d="M831 333Q900 355 960 363V371Q890 364 831 341Z" fill="#b4e4d0" />
      <path d="M831 341Q890 364 960 371L944 395L888 426L831 410Z" fill="#667f75" />
      <path d="M831 410L888 426L944 395L921 451L913 458L831 443Z" fill="url(#lowTube)" />
      <path d="M831 443L918 457L896 502L845 494L831 505Z" fill="#5d796d" />
      <path d="M916 453L925 487L922 507L896 502Q910 480 916 453Z" fill="#bfe3d2" />
      <g fill="none" stroke="#a89858" strokeWidth="1">
        <path d="M831 284L966 333M831 311L956 358M831 333Q900 355 960 363M831 341Q890 364 960 371M831 410L888 426L944 395" />
        <path d="M935 156L896 310Q888 330 893 331Q902 325 908 310L946 156M910 358L888 426Q886 444 902 452M895 424Q896 440 910 450M1068 180L1055 223" />
        <path d="M1018 156L1068 180Q1078 184 1077 190L1066 218Q1062 224 1011 251M1173 156L1436 287M1075 198L1436 321M1075 198L1436 371M1071 214L1436 391M1066 219L1432 397M1024 243L1388 421M1392 421L1436 395" />
        <path d="M1436 557L1386 723L1375 762" />
      </g>
      {/* tool path area */}
      <path d="M965 341L973 345L964 373L945 430L921 465V451L948 380Z" fill="#7fe8de" />
      <g clipPath="url(#cyanClip)">
        <rect x="831" y="280" width="605" height="482" fill="url(#cut)" />
        <path d="M1436 380H1380L1350 450L1285 630Q1255 700 1208 738L1260 762H1436Z" fill="url(#side)" />
        <path d="M1285 630Q1255 700 1208 738L1260 762L1320 762V600Z" fill="url(#sideIn)" />
        <path d="M831 560L872 578L1208 738L1260 762H831Z" fill="#62f7ef" />
        <path d="M831 480H900L922 507L896 550L872 578L831 600Z" fill="#52f6f0" />
        <path d="M831 490H896Q890 535 831 565Z" fill="#1fecee" />
        <path d="M982 291L1436 440V640H1290L1208 738L872 578L915 520L918 440Z" fill="url(#hatch)" mask="url(#fade)" />
        <path d="M1285 640Q1255 700 1208 738L1260 762H1436V640Z" fill="url(#hatch)" opacity="0.350" />
        <path d="M831 490H922V560L872 578L1208 738V762H831Z" fill="url(#mesh)" />
        <g clipPath="url(#filletClip)" fill="none" strokeWidth="1.500" opacity="0.550">
          <g stroke="#3fdcd8">
            {[8, 15, 22, 30].map((r) => (
              <ellipse key={r} cx={1038 - r * 0.700} cy={608 - r * 0.300} rx={r * 1.300} ry={r * 0.600} transform="rotate(34 1038 608)" />
            ))}
            {[0, 1, 2, 3, 4, 5, 6, 7, 8, 9, 10, 11, 12, 13, 14].map((i) => (
              <path key={i} d={`M${1040 + i * 13} ${560 + i * 6}Q${1078 + i * 13} ${612 + i * 6} ${1052 + i * 10} ${665 + i * 6}`} />
            ))}
            {[0, 1, 2, 3, 4].map((i) => (
              <path key={i} d={`M${932 + i * 9} ${500 + i * 8}Q${940 + i * 9} 555 ${890 + i * 14} ${590 + i * 5}`} />
            ))}
          </g>
          <g stroke="#a8e4d0">
            {[0, 1, 2, 3, 4, 5, 6, 7, 8, 9, 10, 11, 12, 13, 14].map((i) => (
              <path key={i} d={`M${1046 + i * 13} ${560 + i * 6}Q${1084 + i * 13} ${612 + i * 6} ${1057 + i * 10} ${665 + i * 6}`} />
            ))}
          </g>
        </g>
        <g stroke="#10e6ec" strokeWidth="4" opacity="0.500">
          {[0, 1, 2, 3, 4, 5, 6].map((i) => (
            <path key={i} d={`M${980 + i * 7} ${632 + i * 18}l${72 + i * 2} 46`} />
          ))}
        </g>
        <path d="M831 650L1053 757" stroke="#00fbff" strokeWidth="7" />
        <path d="M831 663L1030 754" stroke="#0a8f92" strokeDasharray="2 1" />
        <path d="M831 597Q850 590 872 578Q915 550 933 512L944 482M872 578L1208 738L1262 762M940 468L952 473L1285 630Q1255 700 1208 738L1180 745M1347 440L1299 690L1304 762M1386 440L1367 503L1330 640" fill="none" stroke="#0f7c80" strokeDasharray="2 1" />
      </g>
      <path d="M982 291L1299 440C1335 462 1365 472 1398 473M948 380L928 431M1380 618L1353 717L1340 762M845 494L922 507M1353 617H1380" fill="none" stroke="#3fdc6a" />
      <g fill="none" stroke="#1f5f5c" strokeWidth="1">
        <path d="M1011 251L1355 414Q1372 421 1392 421M1011 251L995 297M1355 414L1340 460M1392 421L1377 472" />
        <path d="M831 443L918 457L952 466M900 460L882 500" />
      </g>
      <path d="M1350 564L1372 556L1436 526V532L1375 560Z" fill="#b4dcc6" />
      <g fill="none" stroke="#2030d0" strokeWidth="1.200" strokeDasharray="7 9">
        <path d="M1003 156L971 275L940 381M1016 156L981 281M839 331L831 358M1412 418L1390 490M1436 421L1425 465M1409 418L1404 447" />
      </g>
      <g fill="none" stroke="#e02020" strokeWidth="1.200" strokeDasharray="7 9">
        <path d="M967 156L838 328M995 156L1179 191L1436 245" />
      </g>
      <path d="M980 283L962 341M1406 447L1394 483M1424 467L1380 617" stroke="#f4f03c" strokeWidth="1.300" />
      <path d="M941 381L921 451M1390 490L1353 617" stroke="#fff" strokeWidth="1.600" />
      {/* view triad */}
      <g fontFamily="Liberation Sans" fontSize="12">
        <path d="M874 694L889 688L904 696L901 713L888 719L872 711Z" fill="#c8c4cc" opacity="0.650" stroke="#d88a8a" />
        <path d="M874 694L890 700L904 696M890 700L888 719" fill="none" stroke="#d88a8a" />
        <path d="M884 706L888 682" stroke="#9090d8" strokeWidth="3" />
        <path d="M885 684L889 676L893 685Z" fill="#1a2ac8" />
        <path d="M884 706L871 712" stroke="#e0a0a0" strokeWidth="3" />
        <path d="M873 708L864 713L872 717Z" fill="#c81c1c" />
        <path d="M884 706L900 716" stroke="#a0d0b0" strokeWidth="3" />
        <path d="M900 713L909 720L899 719Z" fill="#1a9a3a" />
        <circle cx="884" cy="706" r="3.500" fill="#f4e8ee" />
        <text x="888" y="676" fill="#2038d0">Z</text>
        <text x="858" y="719" fill="#c01818">X</text>
        <text x="910" y="727" fill="#188a3a">Y</text>
      </g>
    </svg>
  );
}

function Viewport() {
  return (
    <main className="flex min-w-0 flex-1 flex-col">
      <div className="flex h-[27px] shrink-0 border-b-2 border-[#595959] bg-[#ebebeb]">
        <div className="flex w-[207px] items-center gap-1.5 bg-[#595959] pl-1 text-[18px] text-white">
          <svg viewBox="0 0 16 16" aria-hidden="true" className="size-4 shrink-0"><rect x="4" y="0" width="4" height="12" fill="#5f70e0" /><path d="M3 13h6M9 4h5" stroke="#e8d860" /></svg>
          <span className="pt-0.5">13088-cav.prt</span>
          <svg viewBox="0 0 12 12" aria-hidden="true" className="h-3 w-3 shrink-0" fill="none" stroke="#fff" strokeWidth="1.600"><path d="M10 4V2L8 1H2v10h7V9M6 6h5M9 4l2 2-2 2" /></svg>
          <button aria-label="关闭" className="shrink-0">
            <svg viewBox="0 0 10 10" className="size-2.5" stroke="#fff" strokeWidth="2.400"><path d="M1 1l8 8M9 1l-8 8" /></svg>
          </button>
        </div>
      </div>
      <div className="relative min-h-0 flex-1 bg-black">
        <Model />
        <p className="absolute top-[52px] left-[42px] text-[18px] leading-6 font-light text-black">这样的走到方式顶刀杆么</p>
      </div>
    </main>
  );
}

function Grass() {
  const blades = [];
  let seed = 7;
  const rnd = () => {
    seed = (seed * 16807) % 2147483647;
    return seed / 2147483647;
  };
  for (let i = 0; i < 1500; i++) {
    const x = rnd() * 1436;
    const tone = ['#4f6a1c', '#2c3f10', '#7d9430', '#141c08', '#3a5216'][Math.floor(rnd() * 5)];
    blades.push(<path key={i} d={`M${x.toFixed(1)} ${(6 + rnd() * 6).toFixed(1)}l${(rnd() * 8 - 4).toFixed(1)} -${(3 + rnd() * 5).toFixed(1)}`} stroke={tone} />);
  }
  return <svg viewBox="0 0 1436 11" preserveAspectRatio="none" aria-hidden="true" className="h-[11px] w-full shrink-0 bg-[#1a240c]">{blades}</svg>;
}

function Taskbar() {
  return (
    <footer className="flex h-[27px] shrink-0 items-start overflow-hidden border-t border-[#8fa098] bg-[linear-gradient(to_right,#26332d,#3a5a4a_20%,#2c4236_35%,#405c4c_48%,#24332b_60%,#1a231e_80%,#222a26)]">
      <button aria-label="开始" className="mt-0.5 ml-[7px] flex size-[35px] shrink-0 items-center justify-center rounded-full border border-[#6a8a9a] bg-radial from-[#7fb8d8] to-[#1f3f58]">
        <svg viewBox="0 0 20 20" className="size-[22px]">
          <path d="M1 4q4-2 8 0L8 10q-4-2-8 0z" fill="#f0642a" /><path d="M10.500 4.500q4 2 8 0l-1 6q-4 2-8 0z" fill="#8cc83a" />
          <path d="M0 11q4-2 8 0l-1 6q-4-2-8 0z" fill="#3fa0e8" /><path d="M9.500 11.500q4 2 8 0l-1 6q-4 2-8 0z" fill="#ffd02a" />
        </svg>
      </button>
      <button aria-label="浏览器" className="ml-[15px] flex h-10 w-[58px] shrink-0 items-start justify-center rounded-sm border border-[#a8b8b0] bg-linear-to-b from-[#a0aca6] to-[#4c5c54] pt-px">
        <svg viewBox="0 0 32 32" className="size-8"><rect width="32" height="32" rx="3" fill="#1f90ee" /><path d="M6 26V12h18l2 2v12h-4V16h-4v10h-4V16h-4v10z" fill="#fff" /></svg>
      </button>
      <button aria-label="画图" className="flex h-10 w-[66px] shrink-0 items-start justify-center pt-0.5">
        <svg viewBox="0 0 32 32" className="size-[30px]">
          <path d="M1 3l20-2 3 19-18 3z" fill="#8cc0f0" stroke="#d8ecff" /><ellipse cx="21" cy="15" rx="10" ry="9" fill="#f4f0e8" stroke="#999" />
          <circle cx="17" cy="11" r="2" fill="#2f6ad8" /><circle cx="23" cy="9" r="2" fill="#e02a2a" /><circle cx="27" cy="15" r="2" fill="#ffb01c" /><circle cx="16" cy="17" r="2" fill="#2aa83a" />
        </svg>
      </button>
      <button aria-label="NX" className="flex h-10 w-[58px] shrink-0 items-start justify-center rounded-sm border border-[#a8b8b0] bg-linear-to-b from-[#8c9892] to-[#44524a] pt-0.5">
        <Icon name="nx" className="size-[30px]" />
      </button>
      <div className="ml-auto flex items-start text-white">
        <div className="flex items-center gap-2 pt-2">
          <span className="flex size-[15px] -rotate-6 items-center justify-center rounded-sm bg-[#f0501c] font-['Liberation_Sans'] text-sm leading-4 font-bold">S</span>
          <svg viewBox="0 0 10 18" className="h-[18px] w-2.5" fill="none" stroke="#fff"><path d="M3 1h6v4H3zM1 3h6v4H1z" fill="#333" /><path d="M2 13h6l-3 3z" fill="#fff" /></svg>
          <span className="mx-1 border-x-4 border-b-4 border-x-transparent border-b-white" />
          <span className="mx-1 flex h-4 w-2.5 items-center justify-center rounded-full bg-[#9aa0a0]"><Bluetooth size={12} className="shrink-0" /></span>
          <span className="mx-0.5 flex size-4 items-center justify-center rounded-full bg-[#e8e020] font-['Liberation_Sans'] text-sm leading-4 font-bold text-[#117a22]">+</span>
          <svg viewBox="0 0 16 16" className="size-4" fill="none" stroke="#fff" strokeWidth="1.300"><path d="M5 3h10v8H5zM8 14h5M10 11v3M2 2v5M1 2v3h3V2M2 7v7h3" /></svg>
          <Volume2 size={16} fill="#fff" />
        </div>
        <time className="mr-3 ml-4 flex w-[52px] flex-col items-center pt-0.5 font-['Open_Sans','Liberation_Sans',sans-serif] text-[12px] leading-4"><span>19:34</span><span>2018/6/7</span></time>
        <span className="h-10 w-3.5 border-l border-[#889] bg-white/20" />
      </div>
    </footer>
  );
}

function InputBar() {
  return (
    <div className="absolute bottom-7 left-[919px] flex h-[22px] w-[207px] items-center justify-between bg-white pr-1 text-[#2868b4] shadow">
      <span className="flex size-[25px] -rotate-10 items-center justify-center rounded-sm bg-[#e84c1c] font-['Liberation_Sans'] text-[22px] leading-6 font-bold text-white">S</span>
      <span className="font-['Noto_Sans_CJK_SC',sans-serif] text-[15px] leading-5 font-bold">中</span>
      <svg viewBox="0 0 14 14" className="size-3.5"><circle cx="3" cy="5" r="2" fill="none" stroke="#2868b4" /><path d="M9 8h3q0 4-3 5 1-2 0-5z" fill="#2868b4" /></svg>
      <Smile size={17} />
      <Mic size={16} fill="#2868b4" />
      <Keyboard size={17} />
      <span className="relative">
        <User size={16} fill="#2868b4" />
        <span className="absolute -right-1 bottom-0 bg-white font-['Liberation_Sans'] text-[8px] leading-2 font-bold">13</span>
      </span>
      <Shirt size={15} fill="#2868b4" />
      <Wrench size={15} fill="#2868b4" />
    </div>
  );
}

function Watermark() {
  return (
    <div className="pointer-events-none absolute right-[25px] bottom-[17px] flex items-end gap-2">
      <svg viewBox="0 0 72 78" aria-hidden="true" className="h-[78px] w-[72px] opacity-75">
        <path d="M36 1L71 20V58L36 77L1 58V20Z" fill="#2c9fe0" />
        <path d="M36 1Q48 10 54 17L52 30L36 38L20 30L18 17Q24 10 36 1Z" fill="#6fdcf0" />
        <path d="M14 27L36 40L58 27V54L49 59V42L36 50L23 42V59L14 54Z" fill="#8fd8f4" opacity="0.600" />
        <path d="M16 56L36 66L56 56V50L36 59L16 50Z" fill="#143a56" />
      </svg>
      <div className="flex flex-col pb-1.5 text-white/60">
        <span className="font-['Noto_Sans_CJK_SC',sans-serif] text-[41px] leading-[42px] font-bold">3D世界网</span>
        <span className="font-['Liberation_Sans',sans-serif] text-[19px] leading-5">WWW.3DSJW.COM</span>
      </div>
    </div>
  );
}

function Arrows() {
  return (
    <svg aria-hidden="true" className="pointer-events-none absolute inset-0 h-full w-full" stroke="#000" strokeWidth="2">
      <path d="M1259 208L352 470M1163 337L1101 580" fill="none" />
      <path d="M349 471L356 466L358 472ZM1100 584L1097 576L1105 578Z" />
    </svg>
  );
}

export default function App() {
  return (
    <div className="relative flex h-screen flex-col overflow-hidden bg-black font-['Liberation_Mono','Noto_Sans_CJK_SC',monospace] text-black">
      <div className="flex min-h-0 flex-1 flex-col border-b-[7px] border-l-2 border-b-[#141416] border-l-black">
        <div className="flex h-[33px] shrink-0 items-center border-b border-[#b8b8b8] bg-linear-to-b from-[#e2e2e2] to-[#d2d2d2] pb-1">
          <Grip />
          <button className="ml-0.5 flex items-center gap-1 text-[21px] leading-[26px] font-light">
            <Icon name="nx" /><span className="pt-0.5">启动</span>
          </button>
          <Caret />
          <Tools items={ROW1_A} />
          <div className="flex h-7 w-[188px] shrink-0 items-center border border-[#a8a8a8] bg-white pr-1.5">
            <input aria-label="查找命令" placeholder="查找命令" className="w-full min-w-0 flex-1 pt-1 pl-[3px] text-[21px] leading-6 font-light outline-none placeholder:text-[#8a8a8a]" />
            <svg viewBox="0 0 16 16" className="size-4 shrink-0" fill="none" stroke="#333" strokeWidth="1.300"><circle cx="10" cy="6" r="4.500" /><circle cx="10" cy="6" r="2" /><path d="M7 9l-6 6" strokeWidth="2.200" /></svg>
          </div>
          <Caret low />
          <Tools items={ROW1_B} />
          <Tools items={ROW1_C} />
        </div>
        <div className="flex h-[35px] shrink-0 items-center border-t border-b-2 border-t-[#f6f6f6] border-b-[#8c8c8c] bg-linear-to-b from-[#dcdcdc] to-[#c8c8c8]">
          <Grip />
          <Tools items={ROW2} />
          <Sep />
        </div>
        <div className="flex h-9 shrink-0 items-center border-b border-[#a8a8a8] bg-linear-to-b from-[#cacaca] to-[#dadada] pl-[5px]">
          <Combo label="选择过滤器" options={['无选择过滤器']} className="mr-2 w-[196px]" />
          <Combo label="选择范围" options={['整个装配']} className="mr-1 w-[206px]" />
          <Tools items={['chain', '|', 'filterBack', 'filterBox', 'v', 'undoTarget', 'bino', '|', 'hexDot', 'cubeTarget', 'dashRect', 'v', '|', 'solid']} />
          <ToolButton name="blueCube" active />
          <button className="flex items-center pt-0.5 text-[20px] leading-6 font-light"><span className="text-[18px]">G</span>选面</button>
          <button className="mr-1.5 ml-2 pt-0.5 text-[18px] leading-6">MCS10</button>
          <Tools items={['orangeBox', '|', 'holder', 'cutter']} />
        </div>
        <div className="flex h-[25px] shrink-0 items-center border-t border-b border-t-white border-b-[#888] bg-[#d9d9d9]">
          <div className="flex w-[683px] shrink-0 self-stretch border-r border-white" />
          <p className="flex-1 pt-0.5 pl-[3px] text-[22px] leading-[23px] font-bold">全部<span className="text-[20px]"> 1</span></p>
          <span className="h-full w-5 border-x border-[#aaa]" />
          <button aria-label="全屏" className="flex w-12 pl-1">
            <svg viewBox="0 0 16 16" className="size-4"><path d="M1 4V1h3M12 1h3v3M15 12v3h-3M4 15H1v-3" fill="none" stroke="#555" /><rect x="4" y="4" width="8" height="8" fill="#4a8ad0" stroke="#333" /></svg>
          </button>
        </div>
        <div className="flex min-h-0 flex-1">
          <Rail />
          <Navigator />
          <SideBars />
          <Viewport />
        </div>
      </div>
      <Grass />
      <Taskbar />
      <Watermark />
      <InputBar />
      <Arrows />
    </div>
  );
}
